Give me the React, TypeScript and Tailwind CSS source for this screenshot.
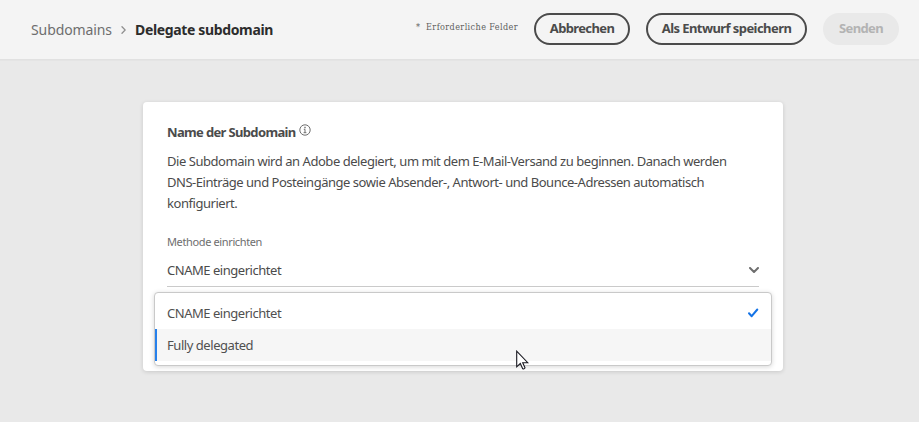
import React from "react";

function Chevron({ className }: { className: string }) {
  return (
    <svg viewBox="0 0 10 6" className={className} fill="none" stroke="currentColor" strokeWidth="2" strokeLinecap="round" strokeLinejoin="round">
      <path d="M1 1l4 4 4-4" />
    </svg>
  );
}

function Header() {
  return (
    <header className="flex h-[60px] items-start border-b border-[#e1e1e1] bg-[#f4f4f4] pr-5 pl-[31px] shadow-[0_1px_0_#e4e4e4]">
      <nav className="flex h-[59px] items-center text-[14px] leading-[59px] whitespace-nowrap">
        <span className="w-[90px] tracking-[-0.1px] text-[#6e6e6e]">Subdomains</span>
        <svg viewBox="0 0 5 8" className="mr-[9px] h-2 w-[5px]" fill="none" stroke="#8e8e8e" strokeWidth="1.3" strokeLinecap="round">
          <path d="M1 .8L4.2 4 1 7.2" />
        </svg>
        <strong className="font-bold tracking-[-0.35px] text-[#2c2c2c]">Delegate subdomain</strong>
      </nav>
      <div className="ml-auto flex pt-[13px] text-[13px] font-bold whitespace-nowrap text-[#4b4b4b]">
        <div className="mr-4 flex h-[29px] w-[102px] items-center gap-[6px] font-['DejaVu_Serif_Condensed','DejaVu_Serif',serif] text-[9px] leading-[29px] font-normal text-[#5e5e5e]">
          <span>*</span>
          <span className="tracking-[0.4px]">Erforderliche Felder</span>
        </div>
        <button className="mr-4 h-8 w-24 rounded-full border-2 border-[#4b4b4b] pb-px leading-[27px] tracking-[-0.63px]">Abbrechen</button>
        <button className="mr-4 h-8 w-[161px] rounded-full border-2 border-[#4b4b4b] pb-px leading-[27px] tracking-[-0.57px]">Als Entwurf speichern</button>
        <button className="h-8 w-[76px] rounded-full bg-[#e9e9e9] pb-px leading-[31px] tracking-[-0.65px] text-[#b3b3b3]">Senden</button>
      </div>
    </header>
  );
}

function Options() {
  return (
    <div className="absolute top-[190px] left-[11px] h-[74px] w-[618px] rounded-[4px] border border-[#c9c9c9] bg-white pt-1 text-[13px] text-[#505050] shadow-[0_1px_5px_rgba(0,0,0,0.16)]">
      <div className="flex h-8 items-center justify-between pr-3 pl-3">
        <span className="pt-[2px] tracking-[-0.47px]">CNAME eingerichtet</span>
        <svg viewBox="0 0 12 10" className="h-[10px] w-3" fill="none" stroke="#1473e6" strokeWidth="2" strokeLinecap="round" strokeLinejoin="round">
          <path d="M2 5.3L4.7 8.2 10.3 1.5" />
        </svg>
      </div>
      <div className="flex h-8 items-center border-l-2 border-[#2680eb] bg-[#f6f6f6] pl-[10px]">
        <span className="pt-[2px] tracking-[-0.45px]">Fully delegated</span>
      </div>
      <svg viewBox="0 0 13 20" className="absolute top-[57px] left-[361px] h-5 w-[13px]" fill="#fff" stroke="#17171f" strokeWidth="1.1">
        <path d="M.7 1.2v15.6l3.6-3.3 2.3 5.1c.3.7 2.7-.2 2.3-1.1l-2.2-4.8h5.1z" />
      </svg>
    </div>
  );
}

export default function App() {
  return (
    <div className="h-[422px] w-[919px] overflow-hidden bg-[#e9e9e9] font-['Noto_Sans',sans-serif]">
      <Header />
      <main className="relative mt-[42px] ml-[143px] h-[269px] w-[640px] rounded-[4px] bg-white px-6 pt-[20px] text-[13px] text-[#4b4b4b] shadow-[0_1px_4px_rgba(0,0,0,0.14)]">
        <div className="flex h-5 items-center gap-1 whitespace-nowrap">
          <h1 className="w-[128px] pt-[2px] font-bold tracking-[-0.65px]">Name der Subdomain</h1>
          <svg viewBox="0 0 12 12" className="mb-1 h-3 w-3" fill="none" stroke="#6e6e6e">
            <circle cx="6" cy="6" r="5.2" />
            <path d="M4.8 5.3H6v3.4M4.6 8.7h2.8" />
            <path d="M6 2.7v1.5" strokeWidth="1.4" />
          </svg>
        </div>
        <div className="mt-[9px] leading-[21px] tracking-[-0.455px] whitespace-nowrap">
          <p>Die Subdomain wird an Adobe delegiert, um mit dem E-Mail-Versand zu beginnen. Danach werden</p>
          <p className="tracking-[-0.47px]">DNS-Einträge und Posteingänge sowie Absender-, Antwort- und Bounce-Adressen automatisch</p>
          <p>konfiguriert.</p>
        </div>
        <p className="mt-[18px] text-[11px] leading-5 tracking-[-0.37px] text-[#6e6e6e]">Methode einrichten</p>
        <div className="mt-[1px] flex h-[34px] w-[592px] items-center justify-between border-b border-[#cacaca]">
          <span className="pt-[2px] tracking-[-0.47px]">CNAME eingerichtet</span>
          <Chevron className="h-[6px] w-[10px] text-[#6e6e6e]" />
        </div>
        <Options />
      </main>
    </div>
  );
}
